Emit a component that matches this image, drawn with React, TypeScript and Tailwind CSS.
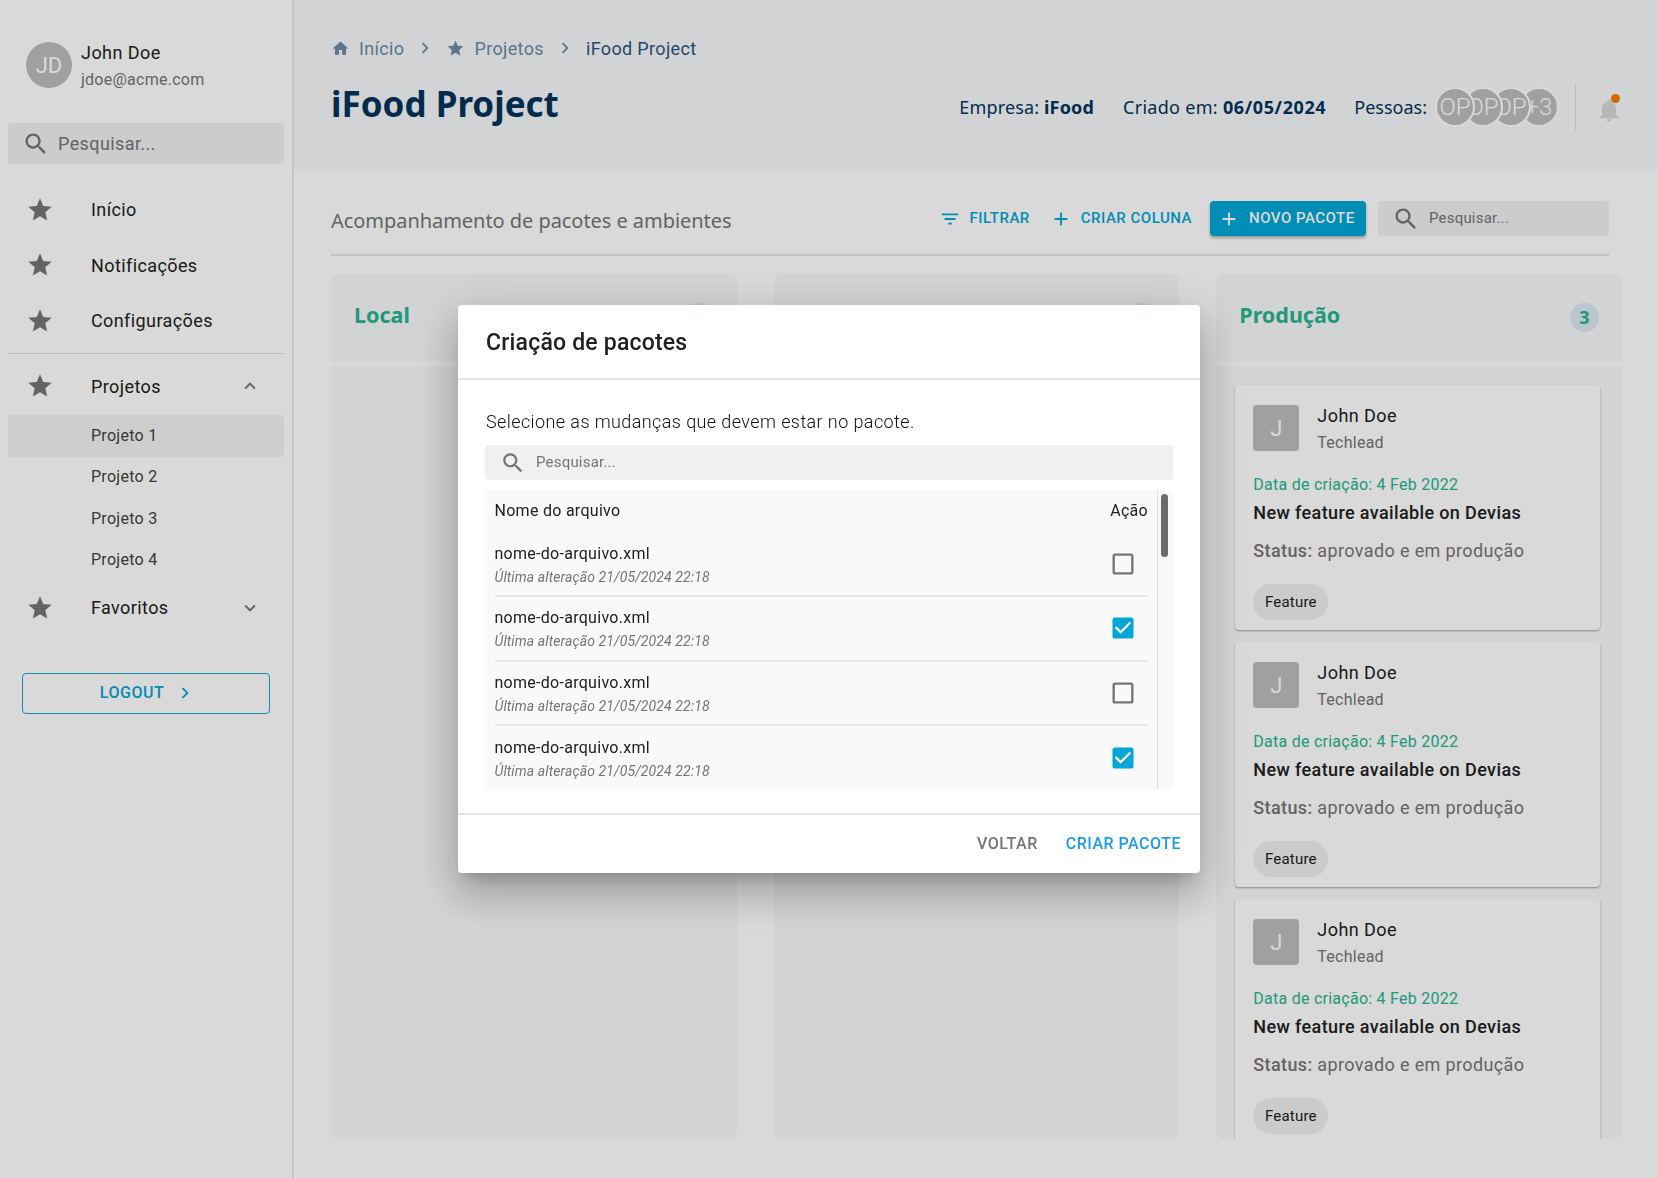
import React from 'react';

const STAR = 'M12 17.27 18.18 21l-1.64-7.03L22 9.24l-7.19-.61L12 2 9.19 8.63 2 9.24l5.46 4.73L5.82 21z';
const HOME = 'M10 20v-6h4v6h5v-8h3L12 3 2 12h3v8z';
const SEARCH = 'M15.5 14h-.79l-.28-.27C15.41 12.59 16 11.11 16 9.5 16 5.91 13.09 3 9.5 3S3 5.91 3 9.5 5.91 16 9.5 16c1.61 0 3.09-.59 4.23-1.57l.27.28v.79l5 4.99L20.49 19l-4.99-5zm-6 0C7.01 14 5 11.99 5 9.5S7.01 5 9.5 5 14 7.01 14 9.5 11.99 14 9.5 14z';
const FILTER = 'M10 18h4v-2h-4v2zM3 6v2h18V6H3zm3 7h12v-2H6v2z';
const ADD = 'M19 13h-6v6h-2v-6H5v-2h6V5h2v6h6v2z';
const UP = 'M12 8l-6 6 1.41 1.41L12 10.83l4.59 4.58L18 14z';
const DOWN = 'M16.59 8.59 12 13.17 7.41 8.59 6 10l6 6 6-6z';
const RIGHT = 'M10 6 8.59 7.41 13.17 12l-4.58 4.59L10 18l6-6z';
const BELL = 'M12 22c1.1 0 2-.9 2-2h-4c0 1.1.89 2 2 2zm6-6v-5c0-3.07-1.64-5.64-4.5-6.32V4c0-.83-.67-1.5-1.5-1.5s-1.5.67-1.5 1.5v.68C7.63 5.36 6 7.92 6 11v5l-2 2v1h16v-1l-2-2z';
const BOX = 'M19 5v14H5V5h14m0-2H5c-1.1 0-2 .9-2 2v14c0 1.1.9 2 2 2h14c1.1 0 2-.9 2-2V5c0-1.1-.9-2-2-2z';
const BOX_CHECKED = 'M19 3H5c-1.11 0-2 .9-2 2v14c0 1.1.89 2 2 2h14c1.11 0 2-.89 2-2V5c0-1.1-.89-2-2-2zm-9 14-5-5 1.41-1.41L10 14.17l7.59-7.59L19 8l-9 9z';

const Icon = ({ d, className }: { d: string; className: string }) => (
  <svg viewBox="0 0 24 24" fill="currentColor" className={className}>
    <path d={d} />
  </svg>
);

const MenuRow = ({ label, chevron }: { label: string; chevron?: string }) => (
  <div className="flex h-[55.5px] items-center pl-[18px] pr-[23px]">
    <Icon d={STAR} className="h-[28px] w-[28px] shrink-0 text-[#757575]" />
    <span className="ml-[37px] flex-1 text-[18px] tracking-[0.4px] text-[#212121]">{label}</span>
    {chevron && <Icon d={chevron} className="h-[22px] w-[22px] text-[#757575]" />}
  </div>
);

const Sidebar = () => (
  <aside className="flex w-[294px] shrink-0 flex-col border-r-2 border-[#e8e8e8] px-[8px] pt-[42px]">
    <div className="flex h-[46px] pl-[18px]">
      <div className="flex h-[46px] w-[46px] items-center justify-center rounded-full bg-[#bdbdbd] text-[22px] text-white">JD</div>
      <div className="ml-[9px] flex flex-col">
        <span className="mt-[-3px] text-[18px] leading-[28px] tracking-[0.45px] text-[#212121]">John Doe</span>
        <span className="mt-[1px] text-[16px] leading-[24px] tracking-[0.25px] text-[#757575]">jdoe@acme.com</span>
      </div>
    </div>
    <div className="mt-[35px] flex h-[41px] items-center rounded-[4px] bg-[#f0f0f0] pl-[14px]">
      <Icon d={SEARCH} className="h-[28px] w-[28px] text-[#757575]" />
      <span className="ml-[8px] pb-[1px] text-[18px] tracking-[0.4px] text-[#757575]">Pesquisar...</span>
    </div>
    <nav className="mt-[18px]">
      <MenuRow label="Início" />
      <MenuRow label="Notificações" />
      <MenuRow label="Configurações" />
      <div className="mt-[4px] mb-[5px] h-[1px] bg-[#e0e0e0]" />
      <MenuRow label="Projetos" chevron={UP} />
      <div className="mt-[1px]">
        {['Projeto 1', 'Projeto 2', 'Projeto 3', 'Projeto 4'].map((p, i) => (
          <div key={p} className={`flex h-[41.5px] items-center rounded-[4px] pl-[83px] text-[16px] tracking-[0.28px] text-[#424242] ${i === 0 ? 'bg-[#f3f3f3]' : ''}`}>
            {p}
          </div>
        ))}
      </div>
      <div className="mt-[-1px]">
        <MenuRow label="Favoritos" chevron={DOWN} />
      </div>
    </nav>
    <div className="mx-[14px] mt-[37px] flex h-[41px] items-center justify-center gap-[10px] rounded-[4px] border-[1.5px] border-[#1aa5cf] pl-[4px] text-[16px] font-medium tracking-[0.5px] text-[#00a6d6]">
      LOGOUT
      <Icon d={RIGHT} className="h-[22px] w-[22px]" />
    </div>
  </aside>
);

const Crumb = ({ d, label }: { d: string; label: string }) => (
  <div className="flex items-center text-[#6b8ba3]">
    <Icon d={d} className="h-[19px] w-[19px]" />
    <span className="ml-[9px] text-[18px] tracking-[0.35px]">{label}</span>
    <Icon d={RIGHT} className="ml-[10px] mr-[10px] h-[22px] w-[22px]" />
  </div>
);

const AVATARS = [
  { text: 'OP', layer: 'z-[4]' },
  { text: 'OP', layer: 'z-[3]' },
  { text: 'OP', layer: 'z-[2]' },
  { text: '+3', layer: 'z-[1]' },
];

const Header = () => (
  <header className="flex h-[169px] bg-[#f6f8fa] pl-[37px] pr-[35px] font-['Noto_Sans',sans-serif] text-[#03345c]">
    <div className="flex flex-1 flex-col pt-[36px]">
      <div className="flex h-[24px] items-center font-['Roboto',sans-serif]">
        <Crumb d={HOME} label="Início" />
        <Crumb d={STAR} label="Projetos" />
        <span className="text-[18px] tracking-[0.35px] text-[#2a5578]">iFood Project</span>
      </div>
      <h1 className="mt-[18px] text-[35px] font-bold leading-[52px]">iFood Project</h1>
    </div>
    <div className="mt-[84px] flex h-[46px] items-center text-[18px]">
      <span className="tracking-[0.15px]">Empresa: <b>iFood</b></span>
      <span className="ml-[29px] tracking-[0.3px]">Criado em: <b className="tracking-[0.6px]">06/05/2024</b></span>
      <span className="ml-[28px]">Pessoas:</span>
      <div className="ml-[8px] flex font-['Roboto',sans-serif] text-[24px] font-light text-white">
        {AVATARS.map((a, i) => (
          <div key={i} className={`relative flex h-[40px] w-[40px] items-center justify-center overflow-hidden rounded-full border-2 border-white bg-[#bdbdbd] ${a.layer} ${i > 0 ? 'ml-[-12px]' : ''}`}>
            {a.text}
          </div>
        ))}
      </div>
      <div className="ml-[16px] h-[46px] w-[1px] bg-[#dcdfe2]" />
      <div className="relative ml-[19px] mt-[6px] h-[28px] w-[28px]">
        <Icon d={BELL} className="h-[28px] w-[28px] text-[#d8d8d8]" />
        <div className="absolute right-[3px] top-[-2px] h-[9px] w-[9px] rounded-full bg-[#f57c00]" />
      </div>
    </div>
  </header>
);

const Toolbar = () => (
  <div className="mr-[13px] flex h-[55px] shrink-0 items-start border-b-2 border-[#e6e6e6] font-['Roboto',sans-serif]">
    <span className="mt-[5px] flex-1 font-['Noto_Sans',sans-serif] text-[20px] tracking-[-0.05px] text-[#757575]">Acompanhamento de pacotes e ambientes</span>
    <div className="flex h-[35px] items-center text-[15px] font-medium tracking-[0.5px] text-[#00a6d6]">
      <Icon d={FILTER} className="h-[22px] w-[22px]" />
      <span className="ml-[9px]">FILTRAR</span>
      <Icon d={ADD} className="ml-[20px] h-[22px] w-[22px]" />
      <span className="ml-[9px]">CRIAR COLUNA</span>
      <div className="ml-[18px] flex h-[35px] w-[156px] items-center rounded-[4px] bg-[#00a6d6] pl-[8px] text-white shadow-[0_2px_3px_rgba(0,0,0,0.3)]">
        <Icon d={ADD} className="h-[22px] w-[22px]" />
        <span className="ml-[9px]">NOVO PACOTE</span>
      </div>
    </div>
    <div className="ml-[12px] flex h-[35px] w-[231px] items-center rounded-[4px] bg-[#f0f0f0] pl-[14px]">
      <Icon d={SEARCH} className="h-[28px] w-[28px] text-[#757575]" />
      <span className="ml-[9px] text-[15px] tracking-[0.2px] text-[#757575]">Pesquisar...</span>
    </div>
  </div>
);

const Card = () => (
  <div className="h-[245px] shrink-0 rounded-[4px] bg-white pl-[18px] pr-[18px] pt-[20px] shadow-[0_1px_2px_rgba(0,0,0,0.35)]">
    <div className="flex h-[46px]">
      <div className="flex h-[46px] w-[46px] items-center justify-center rounded-[4px] bg-[#bdbdbd] text-[22px] text-white">J</div>
      <div className="ml-[18px] flex flex-col">
        <span className="mt-[-1px] text-[18px] leading-[24px] tracking-[0.45px] text-[#212121]">John Doe</span>
        <span className="mt-[3px] text-[16px] leading-[24px] tracking-[0.25px] text-[#757575]">Techlead</span>
      </div>
    </div>
    <div className="mt-[22px] text-[16px] leading-[24px] tracking-[0.25px] text-[#26b48f]">Data de criação: 4 Feb 2022</div>
    <div className="mt-[2px] text-[18px] font-medium leading-[28px] tracking-[0.37px] text-[#212121]">New feature available on Devias</div>
    <div className="mt-[10px] text-[18px] leading-[28px] tracking-[0.37px] text-[#757575]"><span className="font-medium">Status:</span> aprovado e em produção</div>
    <div className="mt-[19px] flex h-[36px] w-[75px] items-center justify-center rounded-full bg-[#efefef] text-[15px] tracking-[0.2px] text-[#212121]">Feature</div>
  </div>
);

const Column = ({ title, count, cards }: { title: string; count: number; cards: number }) => (
  <div className="flex min-h-0 flex-col font-['Roboto',sans-serif]">
    <div className="flex h-[87px] shrink-0 items-center justify-between rounded-t-[8px] bg-[#f6f8fa] pl-[23px] pr-[23px] font-['Noto_Sans',sans-serif]">
      <span className="pb-[5px] text-[21.5px] font-bold text-[#26b48f]">{title}</span>
      <span className="flex h-[29px] w-[29px] items-center justify-center rounded-full bg-[#dbe8f2] text-[18px] font-bold text-[#26b48f]">{count}</span>
    </div>
    <div className="mt-[5px] flex min-h-0 flex-1 flex-col gap-[12px] overflow-hidden rounded-b-[8px] bg-[#f6f8fa] pl-[19px] pr-[22px] pt-[19px]">
      {Array.from({ length: cards }).map((_, i) => <Card key={i} />)}
    </div>
  </div>
);

const Board = () => (
  <div className="mt-[18px] grid min-h-0 flex-1 grid-cols-3 gap-[37px]">
    <Column title="Local" count={0} cards={0} />
    <Column title="Homologação" count={0} cards={0} />
    <Column title="Produção" count={3} cards={3} />
  </div>
);

const FileRow = ({ checked, last }: { checked: boolean; last?: boolean }) => (
  <div className={`flex h-[64.5px] shrink-0 items-center justify-between ${last ? '' : 'border-b-2 border-[#e6e6e6]'}`}>
    <div className="flex flex-col pt-[2px]">
      <span className="text-[16px] leading-[24px] tracking-[0.28px] text-[#212121]">nome-do-arquivo.xml</span>
      <span className="text-[14px] italic leading-[22px] tracking-[0.1px] text-[#757575]">Última alteração 21/05/2024 22:18</span>
    </div>
    <Icon d={checked ? BOX_CHECKED : BOX} className={`mr-[11px] h-[28px] w-[28px] ${checked ? 'text-[#00a6d6]' : 'text-[#757575]'}`} />
  </div>
);

const Modal = () => (
  <div className="fixed inset-0 z-10 flex items-center justify-center bg-black/15">
    <div className="flex h-[568px] w-[742px] flex-col rounded-[4px] bg-white font-['Roboto',sans-serif] shadow-[0_11px_15px_-7px_rgba(0,0,0,0.2),0_24px_38px_3px_rgba(0,0,0,0.14),0_9px_46px_8px_rgba(0,0,0,0.12)]">
      <div className="flex h-[75px] shrink-0 items-center border-b-2 border-[#e6e6e6] pl-[28px] pt-[3px] text-[23px] font-medium tracking-[0.2px] text-[#212121]">
        Criação de pacotes
      </div>
      <div className="flex min-h-0 flex-1 flex-col pl-[27px] pr-[27px] pt-[28px]">
        <p className="pl-[1px] text-[18px] font-light leading-[28px] tracking-[0.4px] text-[#111111]">Selecione as mudanças que devem estar no pacote.</p>
        <div className="mt-[9px] flex h-[35px] shrink-0 items-center rounded-[4px] bg-[#f0f0f0] pl-[15px]">
          <Icon d={SEARCH} className="h-[26px] w-[26px] text-[#757575]" />
          <span className="ml-[10px] text-[15px] tracking-[0.2px] text-[#757575]">Pesquisar...</span>
        </div>
        <div className="mt-[10px] flex h-[299px] shrink-0 overflow-hidden bg-[#f9f9f9]">
          <div className="flex min-w-0 flex-1 flex-col pl-[9.5px] pr-[9px]">
            <div className="flex h-[42.5px] shrink-0 items-center justify-between text-[16px] tracking-[0.28px] text-[#212121]">
              <span>Nome do arquivo</span>
              <span>Ação</span>
            </div>
            <FileRow checked={false} />
            <FileRow checked />
            <FileRow checked={false} />
            <FileRow checked last />
          </div>
          <div className="w-[16px] shrink-0 border-l border-[#dcdcdc] pl-[3px] pt-[4px]">
            <div className="h-[63px] w-[7px] rounded-full bg-[#6b6b6b]" />
          </div>
        </div>
      </div>
      <div className="flex h-[60px] shrink-0 items-center justify-end border-t-2 border-[#e6e6e6] pr-[19px] text-[16px] font-medium tracking-[0.5px]">
        <span className="text-[#757575]">VOLTAR</span>
        <span className="ml-[28px] text-[#1e9be8]">CRIAR PACOTE</span>
      </div>
    </div>
  </div>
);

export default function App() {
  return (
    <div className="flex h-[1178px] overflow-hidden bg-white font-['Roboto',sans-serif]">
      <Sidebar />
      <main className="flex min-w-0 flex-1 flex-col">
        <Header />
        <div className="flex min-h-0 flex-1 flex-col pb-[39px] pl-[37px] pr-[36px] pt-[32px]">
          <Toolbar />
          <Board />
        </div>
      </main>
      <Modal />
    </div>
  );
}
